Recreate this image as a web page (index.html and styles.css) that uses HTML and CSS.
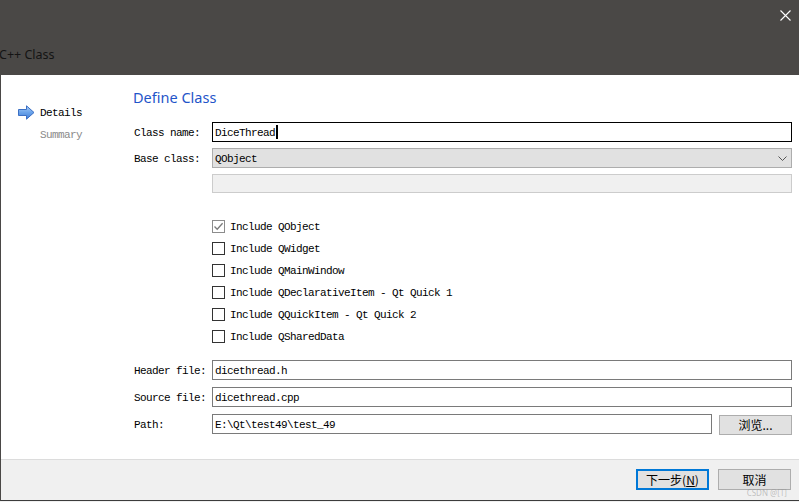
FILE: index.html
```html
<!DOCTYPE html>
<html lang="en">
<head>
<meta charset="utf-8">
<title>C++ Class</title>
<link rel="stylesheet" href="styles.css">
</head>
<body>
<div class="titlebar">
  <div class="close-row">
    <svg class="close" width="11" height="11" viewBox="0 0 11 11"><path d="M0.5 0.5 L10.5 10.5 M10.5 0.5 L0.5 10.5" stroke="#ffffff" stroke-width="1.1" fill="none"/></svg>
  </div>
  <div class="title">C++ Class</div>
</div>
<div class="window">
  <div class="body">
    <aside class="steps">
      <div class="step current">
        <svg class="arrow" width="17" height="15" viewBox="0 0 17 15">
          <defs>
            <linearGradient id="ag" x1="0" y1="0" x2="0" y2="1">
              <stop offset="0" stop-color="#a9cdf6"/>
              <stop offset="0.5" stop-color="#6aa3ea"/>
              <stop offset="1" stop-color="#3f7ed8"/>
            </linearGradient>
          </defs>
          <path d="M0.5 4.5 H8.5 V0.8 L16 7.5 L8.5 14.2 V10.5 H0.5 Z" fill="url(#ag)" stroke="#3b6fc4" stroke-width="1"/>
        </svg>
        <span class="txt">Details</span>
      </div>
      <div class="step todo"><span class="txt">Summary</span></div>
    </aside>
    <main class="page">
      <h1 class="page-title">Define Class</h1>
      <div class="row">
        <label class="lbl">Class name:</label>
        <div class="field focus"><span class="txt">DiceThread</span><span class="caret"></span></div>
      </div>
      <div class="row gap6">
        <label class="lbl">Base class:</label>
        <div class="field combo"><span class="txt">QObject</span><svg class="chev" width="9" height="5" viewBox="0 0 9 5"><path d="M0.5 0.5 L4.5 4.5 L8.5 0.5" stroke="#555" stroke-width="1" fill="none"/></svg></div>
      </div>
      <div class="row gap6 short">
        <span class="lbl"></span>
        <div class="field disabled"></div>
      </div>
      <div class="checks">
        <div class="check"><span class="box checked"><svg width="11" height="11" viewBox="0 0 11 11"><path d="M1.5 5.5 L4.2 8.3 L9.6 2.2" stroke="#7a7a7a" stroke-width="1.3" fill="none"/></svg></span><span class="txt">Include QObject</span></div>
        <div class="check"><span class="box"></span><span class="txt">Include QWidget</span></div>
        <div class="check"><span class="box"></span><span class="txt">Include QMainWindow</span></div>
        <div class="check"><span class="box"></span><span class="txt">Include QDeclarativeItem - Qt Quick 1</span></div>
        <div class="check"><span class="box"></span><span class="txt">Include QQuickItem - Qt Quick 2</span></div>
        <div class="check"><span class="box"></span><span class="txt">Include QSharedData</span></div>
      </div>
      <div class="row files">
        <label class="lbl">Header file:</label>
        <div class="field"><span class="txt">dicethread.h</span></div>
      </div>
      <div class="row gap7">
        <label class="lbl">Source file:</label>
        <div class="field"><span class="txt">dicethread.cpp</span></div>
      </div>
      <div class="row gap7">
        <label class="lbl">Path:</label>
        <div class="field"><span class="txt">E:\Qt\test49\test_49</span></div>
        <button class="btn browse">浏览...</button>
      </div>
    </main>
  </div>
  <footer class="footer">
    <button class="btn default">下一步(<u>N</u>)</button>
    <button class="btn">取消</button>
    <span class="watermark">CSDN @[T]</span>
  </footer>
</div>
</body>
</html>
```

FILE: styles.css
```css
* { box-sizing: border-box; }
html, body { margin: 0; padding: 0; }
body {
  width: 799px;
  height: 502px;
  overflow: hidden;
  background: #f0f0f0;
  font-family: "Liberation Mono", "Noto Sans CJK SC", monospace;
  font-size: 11px;
  letter-spacing: -0.6px;
  color: #000;
}
.txt { padding-top: 2px; }
.titlebar {
  height: 75px;
  background: #4a4846;
  display: flex;
  flex-direction: column;
}
.close-row {
  height: 45px;
  display: flex;
  justify-content: flex-end;
  align-items: flex-start;
  padding: 10px 8px 0 0;
}
.close { display: block; }
.title {
  font-family: "Noto Sans", sans-serif;
  font-size: 12.5px;
  letter-spacing: 0;
  color: #141414;
  line-height: 20px;
  margin-left: -1px;
}
.window {
  border-left: 1px solid #4a4846;
  border-bottom: 1px solid #3c3c3c;
  background: #ffffff;
  height: 426px;
  display: flex;
  flex-direction: column;
}
.body {
  height: 384px;
  display: flex;
}
.steps {
  width: 132px;
  padding-top: 26px;
  flex: none;
}
.step {
  height: 22px;
  display: flex;
  align-items: center;
  padding-left: 39px;
}
.step.current { padding-left: 17px; }
.arrow { margin-right: 5px; flex: none; }
.step.todo { color: #8a8a8a; }
.page {
  flex: 1;
  padding: 12px 7px 0 0;
  display: flex;
  flex-direction: column;
}
.page-title {
  margin: 0 0 15px 0;
  height: 20px;
  line-height: 20px;
  font-family: "Noto Sans", sans-serif;
  font-weight: normal;
  font-size: 14.5px;
  letter-spacing: 0;
  color: #1f55c9;
}
.row {
  display: flex;
  align-items: center;
  height: 20px;
}
.row.gap6 { margin-top: 6px; }
.row.gap7 { margin-top: 7px; }
.row.short { height: 19px; }
.row.files { margin-top: 13px; }
.lbl {
  width: 79px;
  flex: none;
  padding-left: 1px;
  padding-top: 2px;
}
.field {
  flex: 1;
  height: 100%;
  border: 1px solid #7a7a7a;
  background: #fff;
  padding-left: 2px;
  display: flex;
  align-items: center;
  white-space: nowrap;
}
.field.focus { border-color: #000; }
.caret {
  display: inline-block;
  width: 2px;
  height: 14px;
  background: #000;
  margin-left: 1px;
}
.field.combo {
  background: #e1e1e1;
  border-color: #adadad;
  justify-content: space-between;
  padding-right: 4px;
}
.chev { flex: none; display: block; }
.field.disabled {
  background: #f0f0f0;
  border-color: #cccccc;
}
.checks {
  margin-top: 22px;
  padding-left: 79px;
  display: flex;
  flex-direction: column;
}
.check {
  height: 22px;
  display: flex;
  align-items: center;
}
.box {
  width: 13px;
  height: 13px;
  border: 1px solid #333;
  background: #fff;
  margin-right: 5px;
  flex: none;
  display: flex;
  align-items: center;
  justify-content: center;
}
.box.checked { border-color: #8c8c8c; }
.box svg { display: block; }
.btn {
  font-family: "Noto Sans CJK SC", "Liberation Mono", sans-serif;
  font-size: 12px;
  letter-spacing: 0;
  width: 73px;
  height: 21px;
  padding: 0;
  background: #e1e1e1;
  border: 1px solid #adadad;
  color: #000;
  line-height: 1;
  display: flex;
  align-items: center;
  justify-content: center;
}
.btn u { text-decoration: underline; }
.browse {
  margin-left: 7px;
  height: 20px;
  flex: none;
  margin-top: 2px;
}
.footer {
  position: relative;
  height: 41px;
  background: #f0f0f0;
  border-top: 1px solid #dcdcdc;
  display: flex;
  justify-content: flex-end;
  align-items: flex-start;
  gap: 9px;
  padding: 9px 8px 0 0;
}
.btn.default {
  border: 2px solid #0078d7;
}
.watermark {
  position: absolute;
  right: 12px;
  bottom: 3px;
  font-family: "Noto Sans", sans-serif;
  font-size: 8px;
  line-height: 9px;
  letter-spacing: 0;
  color: rgba(150, 150, 150, 0.55);
}
```
